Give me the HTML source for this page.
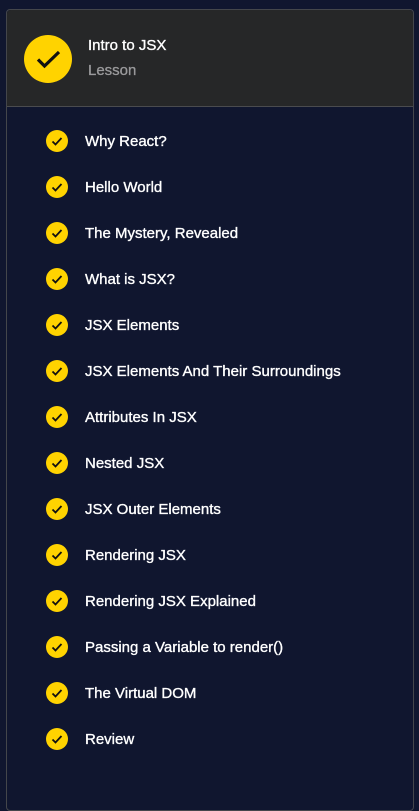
<!DOCTYPE html>
<html><head><style>
html,body{margin:0;padding:0;background:#10162f;width:419px;height:767px;overflow:hidden;font-family:"Liberation Sans",sans-serif;}
.panel{position:absolute;left:6px;top:9px;width:406px;height:800px;border:1px solid #44464b;border-radius:4px;}
.head{position:absolute;left:0;top:0;width:406px;height:96px;background:#262728;border-bottom:1px solid #4a4b4e;border-radius:4px 4px 0 0;}
.big{position:absolute;left:17px;top:25px;width:48px;height:48px;border-radius:50%;background:#ffd300;}
.t1{position:absolute;left:81px;top:27px;color:#fff;font-size:15px;-webkit-text-stroke:0.35px #fff;}
.t2{position:absolute;left:81px;top:52px;color:#9a9a9c;font-size:15px;-webkit-text-stroke:0.3px #9a9a9c;}
.row{position:absolute;left:0;height:24px;}
.c{position:absolute;left:46px;top:0;width:22px;height:22px;border-radius:50%;background:#ffd300;}
.l{position:absolute;left:85px;top:3px;color:#fff;font-size:15px;white-space:nowrap;-webkit-text-stroke:0.35px #fff;}
</style></head><body>
<div class="panel">
<div class="head">
<div class="big"><svg width="48" height="48" viewBox="0 0 48 48"><path d="M14 24.5l6.5 6.5L35 17" stroke="#111" stroke-width="3.2" fill="none"/></svg></div>
<div class="t1">Intro to JSX</div>
<div class="t2">Lesson</div>
</div>
</div>
<div id="rows"></div>
<script>
var items=["Why React?","Hello World","The Mystery, Revealed","What is JSX?","JSX Elements","JSX Elements And Their Surroundings","Attributes In JSX","Nested JSX","JSX Outer Elements","Rendering JSX","Rendering JSX Explained","Passing a Variable to render()","The Virtual DOM","Review"];
var h="";items.forEach(function(t,i){var y=130+i*46;
h+='<div class="row" style="top:'+y+'px"><div class="c"><svg width="22" height="22" viewBox="0 0 22 22"><path d="M6.5 11.5l3 3L15.5 8" stroke="#111" stroke-width="1.8" fill="none"/></svg></div><div class="l">'+t+'</div></div>';});
document.getElementById("rows").innerHTML=h;
</script>
</body></html>
